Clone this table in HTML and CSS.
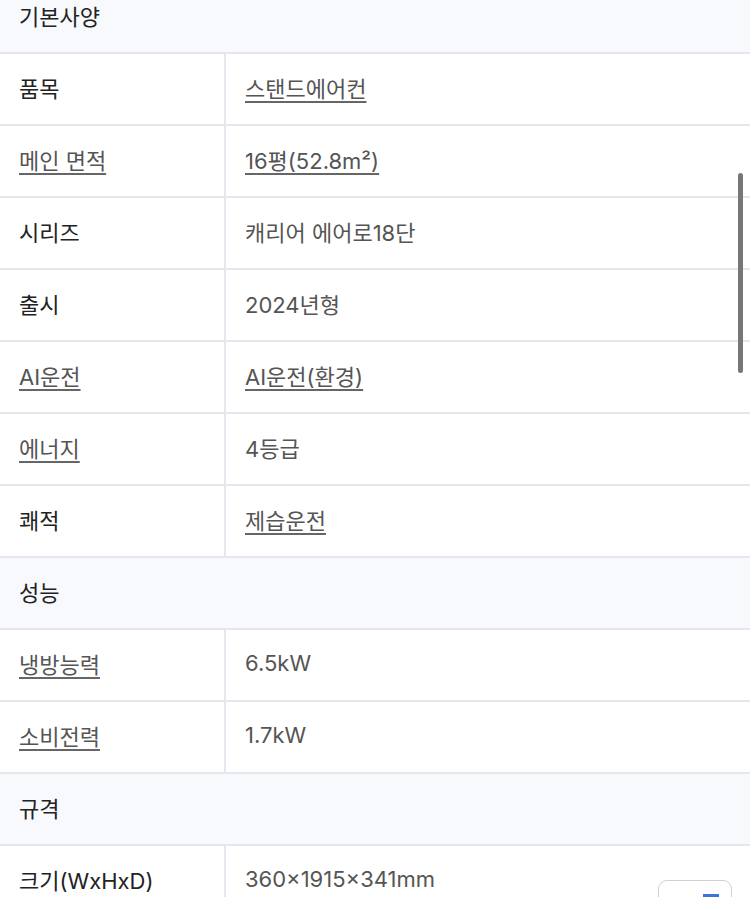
FILE: index.html
```html
<!DOCTYPE html>
<html lang="ko">
<head>
<meta charset="utf-8">
<link rel="stylesheet" href="styles.css">
</head>
<body>
<div class="page">
  <div class="spec">
    <div class="group">기본사양</div>
    <div class="row"><div class="k">품목</div><div class="v"><span class="u">스탠드에어컨</span></div></div>
    <div class="row"><div class="k link"><span class="u">메인 면적</span></div><div class="v"><span class="u">16평(52.8m²)</span></div></div>
    <div class="row"><div class="k">시리즈</div><div class="v">캐리어 에어로18단</div></div>
    <div class="row"><div class="k">출시</div><div class="v">2024년형</div></div>
    <div class="row"><div class="k link"><span class="u">AI운전</span></div><div class="v"><span class="u">AI운전(환경)</span></div></div>
    <div class="row"><div class="k link"><span class="u">에너지</span></div><div class="v">4등급</div></div>
    <div class="row"><div class="k">쾌적</div><div class="v"><span class="u">제습운전</span></div></div>
    <div class="group">성능</div>
    <div class="row"><div class="k link"><span class="u">냉방능력</span></div><div class="v">6.5kW</div></div>
    <div class="row"><div class="k link"><span class="u">소비전력</span></div><div class="v">1.7kW</div></div>
    <div class="group">규격</div>
    <div class="row"><div class="k">크기(WxHxD)</div><div class="v">360×1915×341mm</div></div>
  </div>
  <div class="scrollbar"></div>
  <div class="fab"><span class="fab-mark"></span></div>
</div>
</body>
</html>
```

FILE: styles.css
```css
html, body {
  margin: 0;
  padding: 0;
  background: #ffffff;
}
body {
  font-family: "Inter", "Noto Sans CJK KR", sans-serif;
  font-size: 22px;
  color: #222222;
  overflow: hidden;
}
.page {
  position: relative;
  width: 750px;
  height: 897px;
  overflow: hidden;
}
.spec {
  margin-top: -18px;
  display: flex;
  flex-direction: column;
}
.group {
  height: 72px;
  box-sizing: border-box;
  display: flex;
  align-items: center;
  padding-left: 19px;
  padding-bottom: 5px;
  background: #f8f9fd;
  border-bottom: 2px solid #e6e6ee;
  color: #222222;
}
.row {
  height: 72px;
  box-sizing: border-box;
  display: grid;
  grid-template-columns: 226px 1fr;
  border-bottom: 2px solid #e6e6ee;
}
.k {
  display: flex;
  align-items: center;
  padding-left: 19px;
  padding-bottom: 5px;
  border-right: 2px solid #e6e6ee;
  color: #222222;
}
.k.link {
  color: #555555;
}
.v {
  display: flex;
  align-items: center;
  padding-left: 19px;
  padding-bottom: 5px;
  color: #555555;
}
.u {
  text-decoration: underline;
  text-decoration-color: #666666;
  text-decoration-thickness: 1.5px;
  text-underline-offset: 4px;
}
.scrollbar {
  position: absolute;
  left: 738px;
  top: 173px;
  width: 5px;
  height: 200px;
  border-radius: 3px;
  background: #777777;
}
.fab {
  position: absolute;
  left: 658px;
  top: 880px;
  width: 74px;
  height: 50px;
  border: 1.5px solid #cfcfd4;
  border-radius: 9px;
  background: #ffffff;
  box-sizing: border-box;
}
.fab-mark {
  position: absolute;
  left: 44px;
  top: 13px;
  width: 16px;
  height: 3px;
  background: #3a74d9;
}
```
